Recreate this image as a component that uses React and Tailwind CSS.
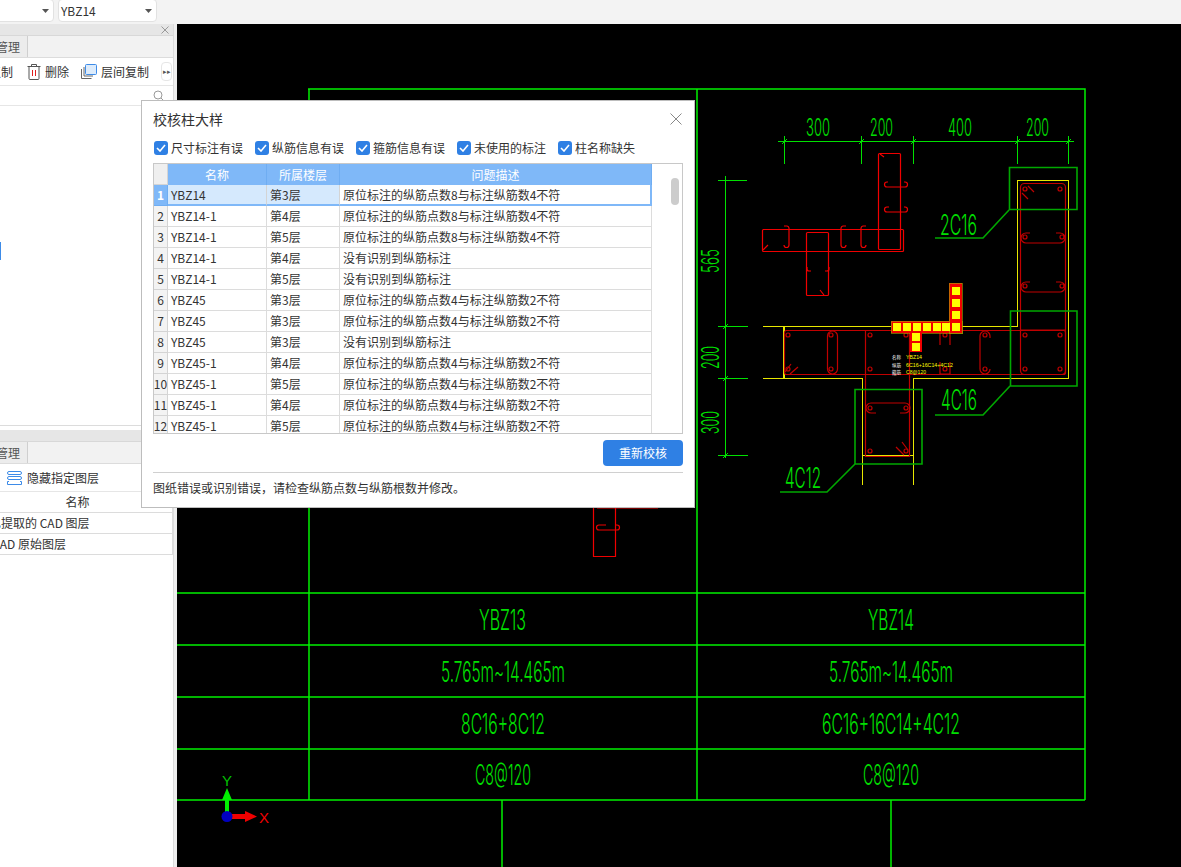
import { Fragment } from "react";

const MISMATCH_8 = "原位标注的纵筋点数8与标注纵筋数4不符";
const MISMATCH_4 = "原位标注的纵筋点数4与标注纵筋数2不符";
const NO_MARK = "没有识别到纵筋标注";

const rows = [
  ["YBZ14", "第3层", MISMATCH_8],
  ["YBZ14-1", "第4层", MISMATCH_8],
  ["YBZ14-1", "第5层", MISMATCH_8],
  ["YBZ14-1", "第4层", NO_MARK],
  ["YBZ14-1", "第5层", NO_MARK],
  ["YBZ45", "第3层", MISMATCH_4],
  ["YBZ45", "第3层", MISMATCH_4],
  ["YBZ45", "第3层", NO_MARK],
  ["YBZ45-1", "第4层", MISMATCH_4],
  ["YBZ45-1", "第5层", MISMATCH_4],
  ["YBZ45-1", "第4层", MISMATCH_4],
  ["YBZ45-1", "第5层", MISMATCH_4],
];

const filters = ["尺寸标注有误", "纵筋信息有误", "箍筋信息有误", "未使用的标注", "柱名称缺失"];

const Caret = () => (
  <svg width="7" height="4" viewBox="0 0 7 4" className="shrink-0">
    <path d="M0 0h7L3.5 4z" fill="#555" />
  </svg>
);

const TopBar = () => (
  <div className="flex h-6 shrink-0 items-start gap-1 bg-[#f3f3f3]">
    <div className="-mt-px -ml-2 flex h-[23px] w-[62px] items-center justify-end rounded border border-[#e2e2e2] bg-white pr-[4px]">
      <Caret />
    </div>
    <div className="-mt-px flex h-[23px] w-[99px] items-center justify-between rounded border border-[#e2e2e2] bg-white pr-[4px] pl-[2px] text-[12px] text-[#333]">
      YBZ14
      <Caret />
    </div>
  </div>
);

const TrashIcon = () => (
  <svg width="14" height="16" viewBox="0 0 14 16" className="shrink-0">
    <path d="M0.5 2.5h13M4.5 2.5V0.5h5v2M2 2.5v12a1 1 0 0 0 1 1h8a1 1 0 0 0 1-1v-12" fill="none" stroke="#555" />
    <path d="M5.5 6v6M8.5 6v6" stroke="#e02020" />
  </svg>
);

const CopyIcon = () => (
  <svg width="16" height="15" viewBox="0 0 16 15" className="shrink-0">
    <path d="M0.5 5v9.5h10M3 3v9h9" fill="none" stroke="#666" />
    <rect x="4.5" y="0.5" width="11" height="10" rx="1" fill="#dcebfb" stroke="#3d8be8" />
  </svg>
);

const LayerIcon = () => (
  <svg width="15" height="14" viewBox="0 0 15 14" className="shrink-0">
    <rect x="0.5" y="0.5" width="14" height="3" rx="1.5" fill="none" stroke="#3d8be8" />
    <rect x="0.5" y="5.5" width="14" height="3" rx="1.5" fill="none" stroke="#3d8be8" />
    <path d="M2 10.5h-1.5v3h14v-3h-1.5" fill="none" stroke="#3d8be8" />
  </svg>
);

const PanelTitle = ({ children }) => (
  <div className="flex h-3 shrink-0 items-center justify-end border-b border-[#d8d8d8] bg-[#e6e6e6] pr-1">{children}</div>
);

const PanelTab = () => (
  <div className="flex h-[22px] shrink-0 border-b border-[#dcdcdc] bg-[#f2f2f2]">
    <div className="flex w-7 items-center overflow-hidden border-r border-[#cfcfcf] bg-[#ececec]">
      <span className="-ml-[4px] shrink-0 text-[12px] text-[#555]">管理</span>
    </div>
  </div>
);

const Sidebar = () => (
  <div className="flex shrink-0">
    <div className="flex w-[173px] flex-col overflow-hidden bg-white text-[12px] text-[#333]">
      <PanelTitle>
        <svg width="8" height="8" viewBox="0 0 8 8">
          <path d="M0.5 0.5l7 7M7.5 0.5l-7 7" stroke="#999" />
        </svg>
      </PanelTitle>
      <PanelTab />
      <div className="flex h-[28px] shrink-0 items-center border-b border-[#e6e6e6]">
        <span className="-ml-[11px] w-6 shrink-0 whitespace-nowrap">复制</span>
        <div className="ml-[14px]"><TrashIcon /></div>
        <span className="ml-[4px] shrink-0">删除</span>
        <div className="ml-3"><CopyIcon /></div>
        <span className="ml-[4px] shrink-0">层间复制</span>
        <div className="ml-[12px] flex h-[19px] w-[11px] shrink-0 items-center justify-center rounded border border-[#e6e6e6] text-[7px] leading-none text-[#555]">▸▸</div>
      </div>
      <div className="flex h-[20px] shrink-0 items-center justify-end border-b border-[#e6e6e6] pr-[9px]">
        <svg width="11" height="11" viewBox="0 0 11 11">
          <circle cx="5" cy="5" r="4" fill="none" stroke="#9a9a9a" />
          <path d="M8 8l2.5 2.5" stroke="#9a9a9a" />
        </svg>
      </div>
      <div className="flex h-[319px] shrink-0 items-center">
        <div className="mt-[-30px] h-[18px] w-px bg-[#3d8be8]" />
      </div>
      <div className="h-[5px] shrink-0 border-t border-[#dcdcdc]" />
      <PanelTitle />
      <PanelTab />
      <div className="flex h-[28px] shrink-0 items-center border-b border-[#e6e6e6] pl-[7px]">
        <LayerIcon />
        <span className="ml-[5px]">隐藏指定图层</span>
      </div>
      <div className="flex h-[21px] shrink-0 items-center justify-center border-r border-b border-[#dcdcdc] pr-[17px]">名称</div>
      <div className="flex h-[21px] shrink-0 items-center overflow-hidden border-r border-b border-[#dcdcdc]">
        <span className="-ml-[11px] whitespace-nowrap">已提取的 CAD 图层</span>
      </div>
      <div className="flex h-[21px] shrink-0 items-center overflow-hidden border-r border-b border-[#dcdcdc]">
        <span className="-ml-[8px] whitespace-nowrap">CAD 原始图层</span>
      </div>
    </div>
    <div className="w-1 border-l border-[#dcdcdc] bg-[#efefef]" />
  </div>
);

// thin stretched CAD lettering, squeezed to the width seen in the drawing
const CadText = ({ x, y, w, size = 28, fill = "#00e000", rotate, children }) => (
  <text
    x={x}
    y={y}
    textLength={w}
    lengthAdjust="spacingAndGlyphs"
    fontSize={size}
    fontWeight="300"
    fill={fill}
    fontFamily="Inter, 'Liberation Sans', sans-serif"
    transform={rotate ? `rotate(-90 ${x} ${y})` : undefined}
  >
    {children}
  </text>
);

const bars = [
  [1025, 189], [1060, 189], [1025, 237], [1062, 237], [1025, 286], [1062, 286],
  [788, 335], [788, 369], [831, 335], [831, 369], [870, 335], [870, 369], [906, 335],
  [945, 335], [945, 369], [985, 335], [985, 369], [1025, 335], [1025, 369], [1060, 335], [1060, 369],
  [870, 408], [906, 408], [870, 451], [906, 451],
];

const rowCells = [897, 907, 917, 927, 937, 946, 956];
const upCells = [291, 303, 315];
const downCells = [337, 347];

const CadDrawing = () => (
  <svg viewBox="177 24 1004 843" className="h-full w-full bg-black">
    {/* drawing frame and schedule grid */}
    <g stroke="#00f000" strokeWidth="1.5" fill="none">
      <path d="M308 89H1085V800M309 89V800M697 89V800" />
      <path d="M177 593H1085M177 645H1085M177 697H1085M177 749H1085M177 800H1085" />
      <path d="M502 800V867M891 800V867" />
    </g>

    {/* dimensions */}
    <g stroke="#00e000" fill="none" shapeRendering="crispEdges">
      <path d="M778 141.500H1074M784.500 136V164M861.500 136V164M913.500 136V164M1017.500 136V164M1068.500 136V164" />
      <path d="M725.500 176V458M718 180.500H747M718 326.500H748M718 378.500H748M718 455.500H748" />
    </g>
    <path d="M782 144l5-5M859 144l5-5M911 144l5-5M1015 144l5-5M1066 144l5-5M723 329l5-5M723 381l5-5M723 458l5-5" stroke="#00e000" />
    <CadText x={806} y={136} w={24} size={24}>300</CadText>
    <CadText x={870} y={136} w={23} size={24}>200</CadText>
    <CadText x={948} y={136} w={24} size={24}>400</CadText>
    <CadText x={1026} y={136} w={23} size={24}>200</CadText>
    <CadText x={719} y={273} w={24} size={24} rotate>565</CadText>
    <CadText x={719} y={369} w={23} size={24} rotate>200</CadText>
    <CadText x={719} y={434} w={23} size={24} rotate>300</CadText>

    {/* left detail, bright red */}
    <g fill="none" stroke="#f00000" strokeWidth="1.2">
      <rect x="878.500" y="153.500" width="22" height="96" rx="1" />
      <rect x="762.500" y="229.500" width="141" height="22" rx="1" />
      <rect x="806.500" y="232.500" width="22" height="63" rx="1" />
      <path d="M888 182h-1a2.500 2.500 0 0 0 0 5h18a2.500 2.500 0 0 0 0-5h-1M889 207h-2a2.500 2.500 0 0 0 0 5h18a2.500 2.500 0 0 0 0-5h-1" />
      <path d="M784 226h3a2.500 2.500 0 0 1 2 2v17a2.500 2.500 0 0 1-5 0M846 226h-3a2.500 2.500 0 0 0-2 2v17a2.500 2.500 0 0 0 5 0M866 226h-3a2.500 2.500 0 0 0-2 2v17a2.500 2.500 0 0 0 5 0" />
      <path d="M807 267v2a2 2 0 0 0 2 2h2M829 267v2a2 2 0 0 1-2 2h-2M763 250l5-5M880 154l4 3M824 295l-4-5" />
    </g>
    <g fill="none" stroke="#f00000" strokeWidth="1.2">
      <path d="M593.500 507V556.500H615.500V507M597 508H658" />
      <path d="M606 525h-7a2.500 2.500 0 0 0 0 5h18a2.500 2.500 0 0 0 0-5h-1" />
    </g>

    {/* wall outline, yellow */}
    <g fill="none" stroke="#e8e800" strokeWidth="1.2" shapeRendering="crispEdges">
      <path d="M763 326.500H1017.500V180.500H1068.500V378.500H913.500V485M763 378.500H862.500V485M862 455.500H914M784 326V378" />
    </g>

    {/* wall reinforcement, dark red */}
    <g fill="none" stroke="#c00000" strokeWidth="1.2">
      <rect x="784.500" y="330.500" width="281" height="44" rx="2" />
      <rect x="1020.500" y="183.500" width="45" height="191" rx="4" />
      <path d="M865.500 331V456.500H909.500V331M1020 330H1066" />
      <rect x="827.500" y="331" width="10" height="43" rx="5" />
      <path d="M940 345V331h10v14M940 362v12h10v-12M980 345v-9a5 5 0 0 1 10 0v2M980 345V369a5 5 0 0 0 10 0" />
      <path d="M1030 233h-4a5 5 0 0 0 0 10h34a5 5 0 0 0 0-10h-4M1030 282h-4a5 5 0 0 0 0 10h34a5 5 0 0 0 0-10h-4" />
      <path d="M876 413h-5a5 5 0 0 1 0-10h34a5 5 0 0 1 0 10h-5" />
      <path d="M785 372l6-8M790 374l8-7M1022 193l6 6M1028 186l6 6M896 447l8 8M902 442l6 8" />
      {bars.map(([x, y]) => (
        <circle key={`${x}-${y}`} cx={x} cy={y} r="2" />
      ))}
    </g>

    {/* leader boxes */}
    <g fill="none" stroke="#00a800" strokeWidth="1.6">
      <path d="M1009.500 167.500H1077V209.500H1009.500ZM1009 210L983 238H935" />
      <path d="M1010.500 311H1077V386H1010.500ZM1010 386L983 415H935" />
      <path d="M855 389.500H922V464H855ZM855 464L827 492H780" />
    </g>
    <CadText x={940} y={235} w={37}>2C16</CadText>
    <CadText x={941} y={410} w={36}>4C16</CadText>
    <CadText x={785} y={488} w={36}>4C12</CadText>

    {/* selected column, highlighted cells */}
    <g shapeRendering="crispEdges">
      <rect x="891" y="321" width="71" height="12" fill="#f00000" stroke="#a8a800" strokeWidth="0.6" />
      <rect x="949" y="283" width="13" height="50" fill="#f00000" stroke="#a8a800" strokeWidth="0.6" />
      <rect x="910" y="333" width="12" height="19" fill="#f00000" />
      {rowCells.map((x) => (
        <rect key={x} x={x - 4} y={323} width="8" height="8" fill="#ffff00" />
      ))}
      {upCells.map((y) => (
        <rect key={y} x={952} y={y - 4} width="8" height="8" fill="#ffff00" />
      ))}
      {downCells.map((y) => (
        <rect key={y} x={912} y={y - 4} width="8" height="8" fill="#ffff00" />
      ))}
    </g>

    {/* tiny label block under the highlight */}
    <g fontSize="5" fontFamily="'Liberation Sans', sans-serif">
      {[["名称", "YBZ14", 359, 16], ["纵筋", "6C16+16C14+4C12", 367, 47], ["箍筋", "C8@120", 374, 20]].map(([label, value, y, w]) => (
        <Fragment key={label}>
          <text x="892" y={y} fill="#ffffff" textLength="9" lengthAdjust="spacingAndGlyphs" fontFamily="'Noto Sans CJK SC', sans-serif">{label}</text>
          <text x="906" y={y} fill="#ffff00" textLength={w} lengthAdjust="spacingAndGlyphs">{value}</text>
        </Fragment>
      ))}
    </g>

    {/* schedule text */}
    <CadText x={479} y={630} w={47}>YBZ13</CadText>
    <CadText x={868} y={630} w={46}>YBZ14</CadText>
    <CadText x={441} y={682} w={124}>5.765m~14.465m</CadText>
    <CadText x={829} y={682} w={124}>5.765m~14.465m</CadText>
    <CadText x={461} y={734} w={84}>8C16+8C12</CadText>
    <CadText x={822} y={734} w={138}>6C16+16C14+4C12</CadText>
    <CadText x={475} y={785} w={56}>C8@120</CadText>
    <CadText x={863} y={785} w={56}>C8@120</CadText>

    {/* axis marker */}
    <path d="M225 812V800H222L227 788L232 800H229V812Z" fill="#00f000" />
    <path d="M232 814H245V811L257 816.500L245 822V819H232Z" fill="#f00000" />
    <circle cx="227" cy="816.500" r="5.500" fill="#0000c0" />
    <text x="222" y="786" fontSize="15" fill="#00c000" fontFamily="'Liberation Sans', sans-serif">Y</text>
    <text x="259" y="823" fontSize="15" fill="#f00000" fontFamily="'Liberation Sans', sans-serif">X</text>
  </svg>
);

const Checkbox = ({ label }) => (
  <label className="flex w-[101px] shrink-0 items-center gap-[3px]">
    <span className="flex h-[14px] w-[14px] shrink-0 items-center justify-center rounded-[3px] bg-[#2f80e4]">
      <svg width="10" height="8" viewBox="0 0 10 8">
        <path d="M1 4l3 3 5-6" fill="none" stroke="#fff" strokeWidth="1.600" />
      </svg>
    </span>
    <span className="whitespace-nowrap">{label}</span>
  </label>
);

const COLS = "grid grid-cols-[14px_99px_73px_312px]";

const CheckTable = () => (
  <div className="relative mt-1 h-[271px] overflow-hidden border border-[#c8c8c8] bg-white">
    <div className={`${COLS} h-[21px] text-white`}>
      <div className="border-r border-b border-[#d4d4d4] bg-[#efefef]" />
      {["名称", "所属楼层", "问题描述"].map((title) => (
        <div key={title} className="flex items-center justify-center border-r border-[#6fadf2] bg-[#7fb8f8]">
          {title}
        </div>
      ))}
    </div>
    {rows.map(([name, floor, issue], i) => {
      const active = i === 0;
      return (
        <div key={i} className={`${COLS} h-[21px]`}>
          <div
            className={`flex items-center justify-center border-r border-b ${
              active ? "border-[#6fadf2] bg-[#7fb8f8] font-bold text-white" : "border-[#d4d4d4] bg-[#f3f3f3]"
            }`}
          >
            {i + 1}
          </div>
          <div
            className={`flex items-center border-r pl-[3px] ${
              active ? "border-b-2 border-r-[#d4d4d4] border-b-[#7fb8f8] bg-[#d5e9fd]" : "border-b border-[#dcdcdc]"
            }`}
          >
            {name}
          </div>
          <div
            className={`flex items-center border-r pl-[3px] ${
              active ? "border-b-2 border-r-[#d4d4d4] border-b-[#7fb8f8] bg-[#d5e9fd]" : "border-b border-[#dcdcdc]"
            }`}
          >
            {floor}
          </div>
          <div
            className={`flex items-center pl-[3px] ${
              active ? "border-r-2 border-b-2 border-[#7fb8f8]" : "border-r border-b border-[#dcdcdc]"
            }`}
          >
            {issue}
          </div>
        </div>
      );
    })}
    <div className="absolute top-[14px] right-[3px] h-[27px] w-2 rounded bg-[#cccccc]" />
  </div>
);

const CheckDialog = () => (
  <div className="absolute top-[100px] left-[141px] flex h-[408px] w-[554px] flex-col border border-[#bdbdbd] bg-white px-[11px] text-[12px] text-[#333]">
    <div className="flex h-[36px] shrink-0 items-center justify-between">
      <span className="text-[14px]">校核柱大样</span>
      <svg width="12" height="12" viewBox="0 0 12 12" className="mr-px">
        <path d="M0.500 0.500l11 11M11.500 0.500l-11 11" stroke="#888" />
      </svg>
    </div>
    <div className="flex h-[22px] shrink-0 items-center pl-px">
      {filters.map((label) => (
        <Checkbox key={label} label={label} />
      ))}
    </div>
    <CheckTable />
    <div className="flex h-[32px] shrink-0 items-end justify-end">
      <button className="h-[26px] w-20 rounded bg-[#2f80e4] text-[12px] text-white">重新校核</button>
    </div>
    <div className="mt-[6px] flex h-[31px] shrink-0 items-center border-t border-[#d0d0d0]">
      图纸错误或识别错误，请检查纵筋点数与纵筋根数并修改。
    </div>
  </div>
);

const App = () => {
  return (
    <div className="relative flex h-[867px] w-[1181px] flex-col overflow-hidden bg-[#f3f3f3] [font-family:'Noto_Sans_CJK_SC','Liberation_Sans',sans-serif]">
      <TopBar />
      <div className="flex min-h-0 flex-1">
        <Sidebar />
        <div className="min-w-0 flex-1">
          <CadDrawing />
        </div>
      </div>
      <CheckDialog />
    </div>
  );
};

export default App;
